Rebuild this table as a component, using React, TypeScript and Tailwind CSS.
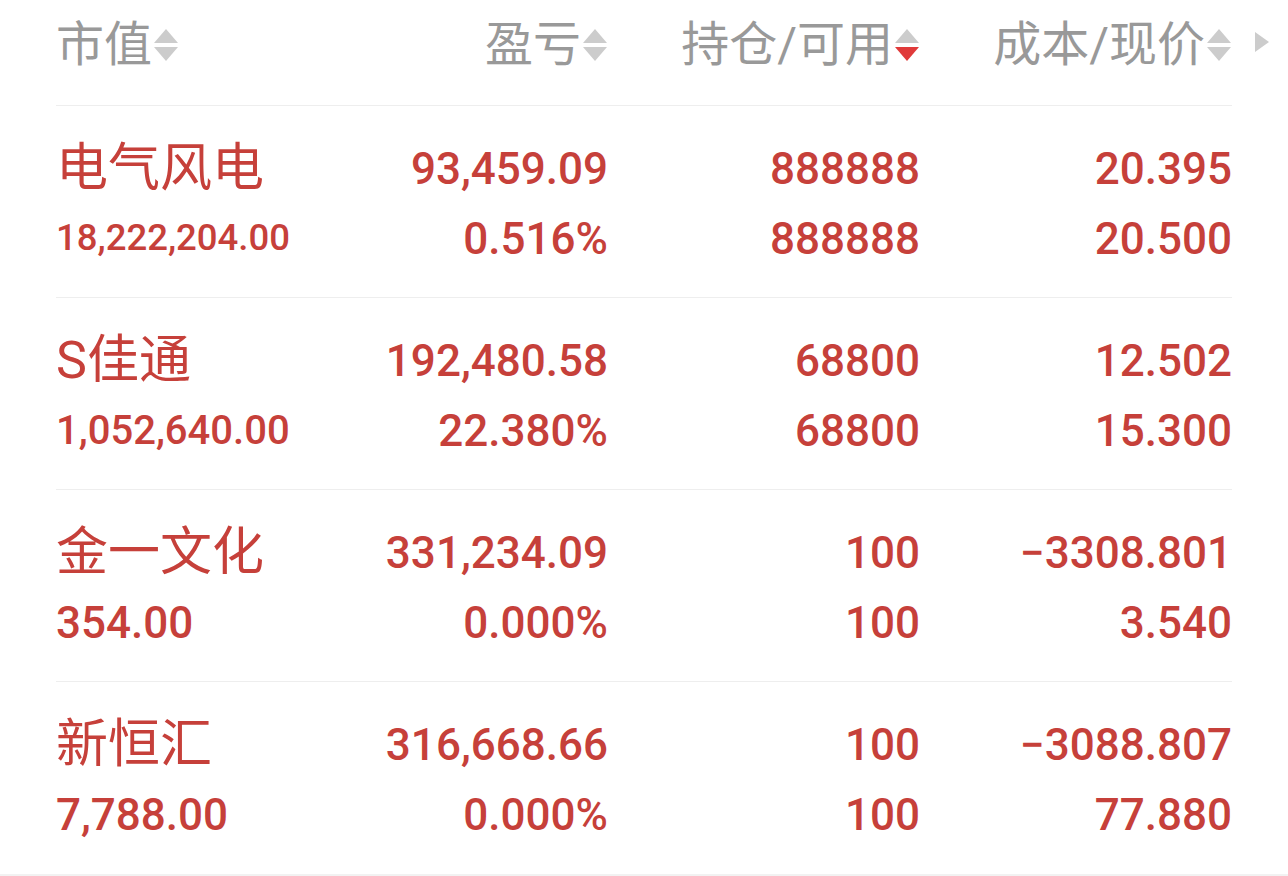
import clsx from "clsx";

type Row = {
    name: string;
    value: string;
    valueSize: string;
    profit: string;
    ratio: string;
    hold: string;
    avail: string;
    cost: string;
    price: string;
};

const ROWS: Row[] = [
    { name: "电气风电", value: "18,222,204.00", valueSize: "text-[36.5px]", profit: "93,459.09", ratio: "0.516%", hold: "888888", avail: "888888", cost: "20.395", price: "20.500" },
    { name: "S佳通", value: "1,052,640.00", valueSize: "text-[40px]", profit: "192,480.58", ratio: "22.380%", hold: "68800", avail: "68800", cost: "12.502", price: "15.300" },
    { name: "金一文化", value: "354.00", valueSize: "text-[44px]", profit: "331,234.09", ratio: "0.000%", hold: "100", avail: "100", cost: "−3308.801", price: "3.540" },
    { name: "新恒汇", value: "7,788.00", valueSize: "text-[44px]", profit: "316,668.66", ratio: "0.000%", hold: "100", avail: "100", cost: "−3088.807", price: "77.880" },
];

const font = "font-['Roboto','Noto_Sans_CJK_SC',sans-serif]";

const SortIcon = ({ active }: { active?: boolean }) => (
    <svg width="26" height="40" viewBox="0 0 26 40" className="ml-[1px] shrink-0">
        <path d="M1 18 L13 4 L25 18 Z" fill="#cccccc" />
        <path d="M1 22 L13 36 L25 22 Z" fill={active ? "#e03a3a" : "#cccccc"} />
    </svg>
);

const Header = ({ label, active, align }: { label: string; active?: boolean; align: "left" | "right" }) => (
    <div className={clsx("flex items-center", align === "right" && "justify-end")}>
        <span className="text-[48px] leading-none text-[#999999]">{label}</span>
        <SortIcon active={active} />
    </div>
);

export default function App() {
    return (
        <div className={clsx("w-[1288px] h-[876px] bg-white overflow-hidden flex flex-col", font)}>
            <div className="relative mx-[56px] h-[106px] border-b border-[#eeeeee] grid grid-cols-[240px_312px_312px_312px] items-center pb-[16px]">
                <Header label="市值" align="left" />
                <Header label="盈亏" align="right" />
                <Header label="持仓/可用" active align="right" />
                <Header label="成本/现价" align="right" />
                <svg width="16" height="22" viewBox="0 0 16 22" className="absolute right-[-38px] top-[31px]">
                    <path d="M1 1 L15 11 L1 21 Z" fill="#cccccc" />
                </svg>
            </div>
            {ROWS.map((row, i) => (
                <div
                    key={`row_${i}`}
                    className={clsx(
                        "mx-[56px] h-[192px] grid grid-cols-[240px_312px_312px_312px] content-center pt-[4px] text-[#c6403a] font-medium",
                        i < ROWS.length - 1 && "border-b border-[#eeeeee]"
                    )}
                >
                    <div className="flex flex-col">
                        <span className="h-[70px] flex items-center text-[52px] font-normal whitespace-nowrap">{row.name}</span>
                        <span className={clsx("h-[70px] flex items-center whitespace-nowrap", row.valueSize)}>{row.value}</span>
                    </div>
                    <div className="flex flex-col items-end text-[44px]">
                        <span className="h-[70px] flex items-center">{row.profit}</span>
                        <span className="h-[70px] flex items-center">{row.ratio}</span>
                    </div>
                    <div className="flex flex-col items-end text-[44px]">
                        <span className="h-[70px] flex items-center">{row.hold}</span>
                        <span className="h-[70px] flex items-center">{row.avail}</span>
                    </div>
                    <div className="flex flex-col items-end text-[44px]">
                        <span className="h-[70px] flex items-center">{row.cost}</span>
                        <span className="h-[70px] flex items-center">{row.price}</span>
                    </div>
                </div>
            ))}
            <div className="flex-1 bg-[#f2f2f2]" />
        </div>
    );
}
